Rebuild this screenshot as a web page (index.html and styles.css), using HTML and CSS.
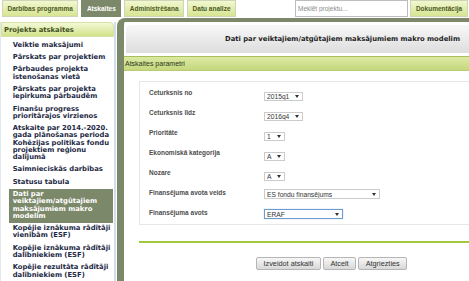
FILE: index.html
```html
<!DOCTYPE html>
<html lang="lv">
<head>
<meta charset="utf-8">
<title>Atskaites</title>
<link rel="stylesheet" href="styles.css">
</head>
<body>
<header class="topnav">
  <nav class="tabs">
    <a class="tab">Darbības programma</a>
    <a class="tab active">Atskaites</a>
    <a class="tab">Administrēšana</a>
    <a class="tab">Datu analīze</a>
  </nav>
  <input class="search" type="text" placeholder="Meklēt projektu...">
  <a class="tab doc">Dokumentācija</a>
</header>
<div class="layout">
  <aside class="sidebar">
    <div class="side-head">Projekta atskaites</div>
    <ul class="side-list">
      <li>Veiktie maksājumi</li>
      <li>Pārskats par projektiem</li>
      <li>Pārbaudes projekta īstenošanas vietā</li>
      <li>Pārskats par projekta iepirkuma pārbaudēm</li>
      <li>Finanšu progress prioritārajos virzienos</li>
      <li>Atskaite par 2014.-2020. gada plānošanas perioda Kohēzijas politikas fondu projektiem reģionu dalījumā</li>
      <li>Saimnieciskās darbības</li>
      <li>Statusu tabula</li>
      <li class="active">Dati par veiktajiem/atgūtajiem maksājumiem makro modelim</li>
      <li>Kopējie iznākuma rādītāji vienībām (ESF)</li>
      <li>Kopējie iznākuma rādītāji dalībniekiem (ESF)</li>
      <li>Kopējie rezultāta rādītāji dalībniekiem (ESF)</li>
    </ul>
  </aside>
  <main class="panel">
    <h1 class="title">Dati par veiktajiem/atgūtajiem maksājumiem makro modelim</h1>
    <div class="section-bar">Atskaites parametri</div>
    <form class="params">
      <div class="row">
        <label class="lbl">Ceturksnis no</label>
        <span class="sel"><select class="w-q"><option>2015q1</option></select></span>
      </div>
      <div class="row">
        <label class="lbl">Ceturksnis līdz</label>
        <span class="sel"><select class="w-q"><option>2016q4</option></select></span>
      </div>
      <div class="row">
        <label class="lbl">Prioritāte</label>
        <span class="sel"><select class="w-s"><option>1</option></select></span>
      </div>
      <div class="row">
        <label class="lbl">Ekonomiskā kategorija</label>
        <span class="sel"><select class="w-s"><option>A</option></select></span>
      </div>
      <div class="row">
        <label class="lbl">Nozare</label>
        <span class="sel"><select class="w-s"><option>A</option></select></span>
      </div>
      <div class="row">
        <label class="lbl">Finansējuma avota veids</label>
        <span class="sel tall"><select class="w-l"><option>ES fondu finansējums</option></select></span>
      </div>
      <div class="row">
        <label class="lbl">Finansējuma avots</label>
        <span class="sel tall"><select class="w-m focus"><option>ERAF</option></select></span>
      </div>
    </form>
    <div class="divider"></div>
    <div class="actions">
      <button type="button" class="btn">Izveidot atskaiti</button>
      <button type="button" class="btn">Atcelt</button>
      <button type="button" class="btn">Atgriezties</button>
    </div>
  </main>
</div>
</body>
</html>
```

FILE: styles.css
```css
* { box-sizing: border-box; }

body {
  margin: 0;
  width: 469px;
  height: 281px;
  overflow: hidden;
  background: #fff;
  font-family: "DejaVu Sans", Verdana, sans-serif;
}

/* top navigation */
.topnav {
  display: flex;
  align-items: flex-start;
  height: 18px;
  padding: 0 1px 0 2px;
}

.tabs {
  display: flex;
  gap: 3px;
}

.tab {
  display: flex;
  align-items: center;
  justify-content: center;
  height: 17px;
  padding: 0 4.5px;
  border: 1px solid #cfd5b6;
  background: linear-gradient(#f1f7d0, #d7e592);
  font: bold 6.5px "Liberation Sans", Arial, sans-serif;
  color: #4b5a25;
  text-decoration: none;
  white-space: nowrap;
}

.tab.active {
  background: #7c886a;
  border-color: #7c886a;
  color: #fff;
}

.search {
  margin-left: auto;
  width: 113px;
  height: 17px;
  border: 1px solid #bdbdbd;
  padding: 0 2px;
  font: 6.5px "Liberation Sans", Arial, sans-serif;
  color: #333;
  outline: none;
}

.search::placeholder { color: #8a8a8a; }

.tab.doc {
  margin-left: 2px;
  width: 58px;
}

/* layout */
.layout {
  display: flex;
  align-items: flex-start;
}

/* sidebar */
.sidebar {
  flex: none;
  width: 116px;
  margin-top: 4px;
  height: 260px;
  border-left: 1px solid #e2e8ef;
  border-right: 2px solid #d3deea;
}

.side-head {
  height: 15px;
  padding-left: 2px;
  display: flex;
  align-items: center;
  background: linear-gradient(#f3f9d6, #d2e289);
  border: 1px solid #d5e1a6;
  border-top-right-radius: 4px;
  font: bold 6.8px "DejaVu Sans", Verdana, sans-serif;
  color: #43511f;
}

.side-list {
  list-style: none;
  margin: 0;
  padding: 2px 0 0 0;
}

.side-list li {
  margin: 0 1px 0 8px;
  padding: 2.6px 0 2.6px 3.7px;
  font: bold 6.8px/7.2px "DejaVu Sans", Verdana, sans-serif;
  color: #1d2944;
}

.side-list li.active {
  background: #7c886a;
  color: #fff;
}

/* main panel */
.panel {
  flex: 1;
  margin-left: 1px;
  margin-right: -8px;
  min-height: 264px;
  border-top: 4px solid #7c886a;
  border-left: 7px solid #7c886a;
  border-top-left-radius: 8px;
  padding: 3px 0 0 2px;
}

.title {
  margin: 0;
  height: 28px;
  display: flex;
  align-items: center;
  padding-left: 99px;
  background: linear-gradient(#f8f8f8, #dddddd);
  border-top-left-radius: 4px;
  font: bold 6.8px "DejaVu Sans", Verdana, sans-serif;
  color: #1e1e1e;
  white-space: nowrap;
}

.section-bar {
  margin: 3px 0 0 -2px;
  height: 15px;
  display: flex;
  align-items: center;
  padding-left: 1px;
  background: linear-gradient(#dce9a2, #c5d77d);
  border-top: 1px solid #a8bf5c;
  border-bottom: 1px solid #b9cc72;
  font: 7px "Liberation Sans", Arial, sans-serif;
  color: #2b3620;
}

/* form */
.params {
  margin: 10px 0 0 13px;
  padding: 7px 0 3px 9px;
  border: 1px solid #e6e6e6;
  border-right: none;
  display: flex;
  flex-direction: column;
  gap: 8px;
}

.row {
  display: flex;
  align-items: flex-start;
  height: 12px;
}

.lbl {
  flex: none;
  width: 115px;
  font: bold 6.5px/8px "Liberation Sans", Arial, sans-serif;
  color: #4d4d4d;
}

.sel {
  position: relative;
  display: block;
  margin-top: 3px;
  height: 9px;
}

.sel.tall {
  margin-top: 0;
  height: 10px;
}

.sel select {
  -webkit-appearance: none;
  appearance: none;
  display: block;
  height: 100%;
  margin: 0;
  padding: 0 0 0 2px;
  border: 1px solid #cbcbcb;
  border-radius: 0;
  background: #fff;
  font: 6.7px/7px "Liberation Sans", Arial, sans-serif;
  color: #333;
  outline: none;
}

.sel::after {
  content: "";
  position: absolute;
  right: 4px;
  top: 3px;
  border-left: 2px solid transparent;
  border-right: 2px solid transparent;
  border-top: 3px solid #333;
}

.sel.tall::after { top: 3.5px; }

.w-q { width: 39px; }
.w-s { width: 21px; }
.w-l { width: 116px; }
.w-m { width: 79px; }

.sel select.focus {
  border-color: #6d9bd1;
  box-shadow: 0 0 1px #9cc0e8;
}

.divider {
  margin: 16px 0 0 13px;
  height: 2px;
  background: #a2c93e;
}

.actions {
  display: flex;
  gap: 2px;
  margin: 14px 0 0 130px;
}

.btn {
  height: 13px;
  padding: 0 6.5px;
  border: 1px solid #b5b5b5;
  border-radius: 2px;
  background: linear-gradient(#f7f7f7, #d8d8d8);
  font: 7.3px "Liberation Sans", Arial, sans-serif;
  color: #333;
}
```
